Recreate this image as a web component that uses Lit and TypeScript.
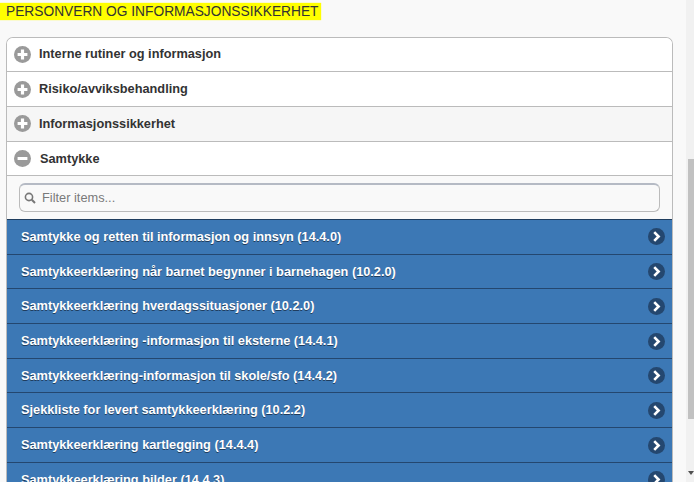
import { LitElement, html, css, svg } from "lit";
import { customElement } from "lit/decorators.js";

const heads = ["Interne rutiner og informasjon", "Risiko/avviksbehandling", "Informasjonssikkerhet"];
const items = [
  "Samtykke og retten til informasjon og innsyn (14.4.0)",
  "Samtykkeerklæring når barnet begynner i barnehagen (10.2.0)",
  "Samtykkeerklæring hverdagssituasjoner (10.2.0)",
  "Samtykkeerklæring -informasjon til eksterne (14.4.1)",
  "Samtykkeerklæring-informasjon til skole/sfo (14.4.2)",
  "Sjekkliste for levert samtykkeerklæring (10.2.2)",
  "Samtykkeerklæring kartlegging (14.4.4)",
  "Samtykkeerklæring bilder (14.4.3)",
];

const plus = svg`<svg class="ic" viewBox="0 0 18 18"><circle cx="9" cy="9" r="9" fill="#9a9a9a"/><path d="M9 3.8v10.4M3.8 9h10.4" stroke="#fff" stroke-width="3.4"/></svg>`;
const minus = svg`<svg class="ic" viewBox="0 0 18 18"><circle cx="9" cy="9" r="9" fill="#9a9a9a"/><path d="M3.8 9h10.4" stroke="#fff" stroke-width="3.4"/></svg>`;
const chev = svg`<svg class="chev" viewBox="0 0 18 18"><circle cx="9" cy="9" r="9" fill="#24476f"/><path d="M6.6 4.4 11.2 9l-4.6 4.6" fill="none" stroke="#fff" stroke-width="2.8"/></svg>`;
const search = svg`<svg class="search" viewBox="0 0 12 12"><circle cx="5" cy="5" r="3.6" fill="none" stroke="#777" stroke-width="1.6"/><path d="M7.8 7.8 11 11" stroke="#777" stroke-width="2"/></svg>`;

@customElement("app-root")
export class AppRoot extends LitElement {
  static styles = css`
    :host { display: block; height: 482px; overflow: hidden; background: #f9f9f9; font-family: "Liberation Sans", Arial, sans-serif; position: relative; }
    .page { padding: 3px 21px 0 6px; }
    h1 { margin: 0; font-size: 13.76px; font-weight: 400; line-height: 17px; color: #333; height: 34px; }
    h1 span { background: #ffff00; padding: 0 3px 0 6px; margin-left: -6px; box-shadow: 0 0 1px #ffff00; display: inline-block; }
    .list { border: 1px solid #bbb; border-bottom: 0; border-radius: 7px 7px 0 0; overflow: hidden; background: #fff; }
    .head { display: flex; align-items: center; gap: 8px; padding: 0 0 0 7px; box-sizing: border-box; height: 34.7px; border-bottom: 1px solid #bbb; font-size: 12.75px; font-weight: 700; color: #333; background: #fff; }
    .head:first-child { height: 34.2px; }
    .head:first-child span, .head:nth-child(2) span { margin-bottom: 2px; }
    .head.alt { background: #f6f6f6; }
    .head.open { gap: 9px; }
    .ic { width: 17px; height: 17px; flex: none; }
    .filter { background: #f9f9f9; height: 43.6px; padding: 7px 12px 0 12px; box-sizing: border-box; border-bottom: 1px solid #1f3d5e; }
    .box { height: 29px; box-sizing: border-box; border: 1px solid #bbb; border-top: 2px solid #b5bac4; border-radius: 6px; display: flex; align-items: center; gap: 6px; padding: 0 0 1px 4px; background: #f9f9f9; color: #7a7a7a; font-size: 12.8px; }
    .search { width: 12px; height: 12px; flex: none; }
    .item { display: flex; align-items: center; justify-content: space-between; height: 34.7px; box-sizing: border-box; padding: 0 7px 0 14px; border-bottom: 1px solid #24476f; background: #3c78b5; color: #fff; font-size: 12.76px; font-weight: 700; text-shadow: 0 1px 0 #1f3d5e; }
    .item span { margin-bottom: 0.5px; }
    .chev { width: 17px; height: 17px; flex: none; margin-top: 0.5px; }
    .bar { position: absolute; right: 0; top: 0; width: 8px; height: 482px; background: #f1f1f1; }
    .thumb { position: absolute; right: 0; top: 159px; width: 6px; height: 260px; background: #c1c1c1; }
    .arrow { position: absolute; right: 0; top: 471px; width: 0; height: 0; border: 3px solid transparent; border-top: 4px solid #505050; border-bottom: 0; }
  `;

  render() {
    return html`
      <div class="page">
        <h1><span>PERSONVERN OG INFORMASJONSSIKKERHET</span></h1>
        <div class="list">
          ${heads.map((h, i) => html`<div class="head ${i === 2 ? "alt" : ""}">${plus}<span>${h}</span></div>`)}
          <div class="head open">${minus}<span>Samtykke</span></div>
          <div class="filter"><div class="box">${search}<span>Filter items...</span></div></div>
          ${items.map((t) => html`<div class="item"><span>${t}</span>${chev}</div>`)}
        </div>
      </div>
      <div class="bar"><div class="thumb"></div><div class="arrow"></div></div>
    `;
  }
}
